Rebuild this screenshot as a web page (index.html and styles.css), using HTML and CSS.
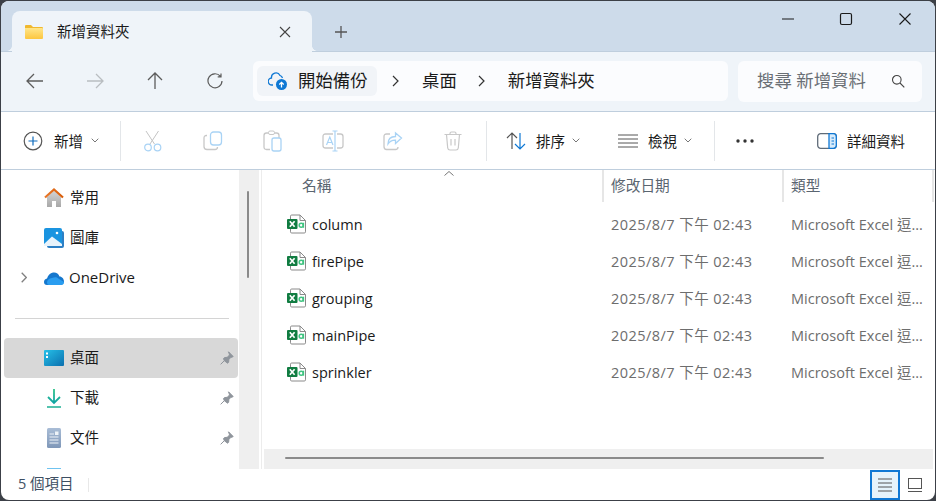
FILE: index.html
```html
<!DOCTYPE html>
<html lang="zh-Hant">
<head>
<meta charset="utf-8">
<title>新增資料夾</title>
<link rel="stylesheet" href="styles.css">
</head>
<body>
<svg class="defs" width="0" height="0" aria-hidden="true">
  <defs>
    <linearGradient id="fold" x1="0" y1="0" x2="0" y2="1"><stop offset="0" stop-color="#ffe68a"/><stop offset="1" stop-color="#fcc63f"/></linearGradient>
    <linearGradient id="roof" x1="0" y1="0" x2="1" y2="0"><stop offset="0" stop-color="#e8782a"/><stop offset="1" stop-color="#d85c08"/></linearGradient>
    <linearGradient id="wall" x1="0" y1="0" x2="0" y2="1"><stop offset="0" stop-color="#d4d4d4"/><stop offset="1" stop-color="#a8a8a8"/></linearGradient>
    <linearGradient id="desk" x1="0" y1="0" x2="1" y2="1"><stop offset="0" stop-color="#26c0e8"/><stop offset="1" stop-color="#0b6fae"/></linearGradient>
    <linearGradient id="doc" x1="0" y1="0" x2="0" y2="1"><stop offset="0" stop-color="#a9bdd6"/><stop offset="1" stop-color="#7f97b8"/></linearGradient>
    <linearGradient id="dl" x1="0" y1="0" x2="0" y2="1"><stop offset="0" stop-color="#2fc48a"/><stop offset="1" stop-color="#0fa3a3"/></linearGradient>
    <symbol id="xl" viewBox="0 0 20 20">
      <path d="M3.500 5V2.200q0-1.200 1.200-1.200H13l5.500 5.500v11.300q0 1.200-1.200 1.200H4.700q-1.200 0-1.200-1.200V15" fill="#fff" stroke="#8a8a8a"/>
      <path d="M13 1v5.500h5.500" fill="none" stroke="#8a8a8a"/>
      <rect x="0" y="5" width="10.500" height="10" rx="1" fill="#107c41"/>
      <path d="M2.800 7.300l4.800 5.400M7.600 7.300l-4.800 5.400" stroke="#fff" stroke-width="1.700"/>
      <circle cx="14.200" cy="11.300" r="2" fill="none" stroke="#3fc380" stroke-width="1.500"/>
      <path d="M16.400 8.700v5" stroke="#3fc380" stroke-width="1.500"/>
    </symbol>
    <symbol id="pin" viewBox="0 0 14 14">
      <path d="M8.500 .8l4.700 4.700-1.300.7-1 .1-2 2.200-.3 2.800-1 .9L4.300 9.700.8 13.200.8 13.200 4.300 9.700 3.500 7.600l1-1 2.700-.3 2.100-2 .1-1z" fill="#8f959c" stroke="#8f959c"/>
    </symbol>
    <symbol id="chev" viewBox="0 0 8 5"><path d="M.7.7L4 4l3.300-3.300" fill="none" stroke="#777" stroke-width="1"/></symbol>
  </defs>
</svg>
<div class="window">
  <header class="titlebar">
    <div class="tab">
      <svg class="tab-folder" width="20" height="16" viewBox="0 0 20 16"><path d="M1 2q0-1 1-1h5l2 2h9q1 0 1 1v2H1z" fill="#f0b82e"/><path d="M1 4h17q1 0 1 1v9q0 1-1 1H2q-1 0-1-1z" fill="url(#fold)"/></svg>
      <span class="tab-title">新增資料夾</span>
      <svg class="tab-close" width="12" height="12" viewBox="0 0 12 12"><path d="M1 1l10 10M11 1L1 11" stroke="#444" stroke-width="1.100"/></svg>
    </div>
    <svg class="tab-add" width="14" height="14" viewBox="0 0 14 14"><path d="M7 1v12M1 7h12" stroke="#555" stroke-width="1.300"/></svg>
    <div class="winbtns">
      <button class="winbtn"><svg width="14" height="14" viewBox="0 0 14 14"><path d="M1 7h12" stroke="#1a1a1a" stroke-width="1.100"/></svg></button>
      <button class="winbtn"><svg width="14" height="14" viewBox="0 0 14 14"><rect x="1.500" y="1.500" width="11" height="11" rx="1.500" fill="none" stroke="#1a1a1a" stroke-width="1.200"/></svg></button>
      <button class="winbtn"><svg width="14" height="14" viewBox="0 0 14 14"><path d="M1.500 1.500l11 11M12.500 1.500l-11 11" stroke="#1a1a1a" stroke-width="1.100"/></svg></button>
    </div>
  </header>

  <nav class="navbar">
    <button class="navbtn"><svg width="18" height="16" viewBox="0 0 18 16"><path d="M8 1L1 8l7 7M1 8h16" fill="none" stroke="#5c5c5c" stroke-width="1.300"/></svg></button>
    <button class="navbtn"><svg width="18" height="16" viewBox="0 0 18 16"><path d="M10 1l7 7-7 7M17 8H1" fill="none" stroke="#b9bdc1" stroke-width="1.300"/></svg></button>
    <button class="navbtn"><svg width="16" height="18" viewBox="0 0 16 18"><path d="M1 8l7-7 7 7M8 1v16" fill="none" stroke="#5c5c5c" stroke-width="1.300"/></svg></button>
    <button class="navbtn"><svg width="16" height="16" viewBox="0 0 16 16"><path d="M13.300 3.200A7 7 0 1 0 15 8M14 .5v3.300h-3.300" fill="none" stroke="#5c5c5c" stroke-width="1.200"/></svg></button>
    <div class="address">
      <div class="crumb-home">
        <svg class="cloud" width="20" height="20" viewBox="0 0 20 20"><path d="M5 14H4a3.500 3.500 0 0 1-.5-7A4.500 4.500 0 0 1 12 4.500 4 4 0 0 1 14.500 7" fill="none" stroke="#0f78d4" stroke-width="1.300"/><circle cx="13.500" cy="13.500" r="5.500" fill="#0f78d4"/><path d="M13.500 16.500v-5M11.300 13.500l2.200-2.200 2.200 2.200" fill="none" stroke="#fff" stroke-width="1.300"/></svg>
        <span>開始備份</span>
      </div>
      <svg class="sep-chev" width="7" height="12" viewBox="0 0 7 12"><path d="M1 1l5 5-5 5" fill="none" stroke="#333" stroke-width="1.200"/></svg>
      <span class="crumb">桌面</span>
      <svg class="sep-chev" width="7" height="12" viewBox="0 0 7 12"><path d="M1 1l5 5-5 5" fill="none" stroke="#333" stroke-width="1.200"/></svg>
      <span class="crumb">新增資料夾</span>
    </div>
    <div class="search">
      <span>搜尋 新增資料</span>
      <svg width="14" height="14" viewBox="0 0 14 14"><circle cx="5.800" cy="5.800" r="4.300" fill="none" stroke="#444" stroke-width="1.100"/><path d="M9 9l4.300 4.300" stroke="#444" stroke-width="1.100"/></svg>
    </div>
  </nav>

  <div class="toolbar">
    <div class="tool new">
      <svg width="20" height="20" viewBox="0 0 20 20"><circle cx="10" cy="10" r="8.800" fill="none" stroke="#555" stroke-width="1.200"/><path d="M10 5.500v9M5.500 10h9" stroke="#0f6cbd" stroke-width="1.200"/></svg>
      <span>新增</span>
      <svg class="chev" width="8" height="5"><use href="#chev"/></svg>
    </div>
    <i class="tsep"></i>
    <div class="tool-icon first"><svg width="20" height="22" viewBox="0 0 20 22"><path d="M3 1l8.500 13M15.500 1L7 14" stroke="#c4c4c4" fill="none"/><circle cx="5" cy="17.500" r="3.300" fill="none" stroke="#a9d3f5" stroke-width="1.200"/><circle cx="14.500" cy="17.500" r="3.300" fill="none" stroke="#a9d3f5" stroke-width="1.200"/></svg></div>
    <div class="tool-icon"><svg width="20" height="20" viewBox="0 0 20 20"><path d="M4 4.500H3.500Q1 4.500 1 7v8.500Q1 18.500 4 18.500h8q2.500 0 2.500-2.500" fill="none" stroke="#c8c8c8" stroke-width="1.300"/><rect x="7.500" y="1" width="11" height="13" rx="3" fill="#fff" stroke="#a9d3f5" stroke-width="1.300"/></svg></div>
    <div class="tool-icon"><svg width="20" height="22" viewBox="0 0 20 22"><path d="M7 19.500H3.500Q1 19.500 1 17V5.500Q1 3 3.500 3h10Q16 3 16 5.500V8" fill="none" stroke="#c8c8c8" stroke-width="1.300"/><rect x="5.500" y="1" width="6" height="3.500" rx="1.500" fill="#fff" stroke="#c8c8c8"/><rect x="9" y="8" width="9" height="13" rx="2" fill="#fff" stroke="#a9d3f5" stroke-width="1.300"/></svg></div>
    <div class="tool-icon"><svg width="22" height="22" viewBox="0 0 22 22"><path d="M11 4H3.500Q1 4 1 6.500v9Q1 18 3.500 18H11M15 4h3.500Q21 4 21 6.500v9Q21 18 18.500 18H15" fill="none" stroke="#c8c8c8" stroke-width="1.300"/><path d="M4.500 15l3.300-8 3.200 8M5.800 12.500h4.200" fill="none" stroke="#a9d3f5" stroke-width="1.200"/><path d="M13 1v20M10.500 1h5M10.500 21h5" stroke="#a9d3f5" stroke-width="1.200"/></svg></div>
    <div class="tool-icon"><svg width="20" height="20" viewBox="0 0 20 20"><path d="M7 3H3.500Q1 3 1 5.500V15.500Q1 18.500 3.500 18.500H12.500Q15 18.500 15 16" fill="none" stroke="#c8c8c8" stroke-width="1.300"/><path d="M12.500 2v3.500C8 5.500 5 8 5 13c2-3 4-4 7.500-3.800V12.500L18.500 7z" fill="none" stroke="#a9d3f5" stroke-width="1.300"/></svg></div>
    <div class="tool-icon"><svg width="18" height="20" viewBox="0 0 18 20"><path d="M.5 3.500h17M6 3.500V2.500Q6 1 7.500 1h3Q12 1 12 2.500v1M2.500 3.500L3.700 17Q4 19 6 19h6q2 0 2.300-2L15.500 3.500M7 8v6.500M11 8v6.500" fill="none" stroke="#c8c8c8" stroke-width="1.200"/></svg></div>
    <i class="tsep tsep-b"></i>
    <div class="tool sort">
      <svg width="20" height="18" viewBox="0 0 20 18"><path d="M1 6l5-5 5 5M6 1v16" fill="none" stroke="#555" stroke-width="1.200"/><path d="M9 12l5 5 5-5M14 17V1" fill="none" stroke="#0f78d4" stroke-width="1.200"/></svg>
      <span>排序</span>
      <svg class="chev" width="8" height="5"><use href="#chev"/></svg>
    </div>
    <div class="tool view">
      <svg width="20" height="14" viewBox="0 0 20 14"><path d="M0 1h20M0 5h20M0 9h20M0 13h20" stroke="#555" stroke-width="1"/></svg>
      <span>檢視</span>
      <svg class="chev" width="8" height="5"><use href="#chev"/></svg>
    </div>
    <i class="tsep tsep-c"></i>
    <svg class="more" width="20" height="4" viewBox="0 0 20 4"><circle cx="3" cy="2" r="1.700" fill="#333"/><circle cx="10" cy="2" r="1.700" fill="#333"/><circle cx="17" cy="2" r="1.700" fill="#333"/></svg>
    <div class="tool details">
      <svg width="20" height="16" viewBox="0 0 20 16"><rect x=".7" y=".7" width="18.600" height="14.600" rx="3" fill="#fff" stroke="#5f6b78" stroke-width="1.300"/><path d="M12 .7h4.300q3 0 3 3v8.600q0 3-3 3H12z" fill="#d9ecfb" stroke="#0f78d4" stroke-width="1.300"/><path d="M14.500 5h2.500M14.500 8h2.500M14.500 11h2.500" stroke="#0f78d4"/></svg>
      <span>詳細資料</span>
    </div>
  </div>

  <div class="body">
    <aside class="sidebar">
      <div class="side-item">
        <svg class="side-icon" width="20" height="20" viewBox="0 0 20 20"><path d="M3 9l7-6.500L17 9v10H12v-6H8v6H3z" fill="url(#wall)"/><path d="M1 9.500L10 1.500l9 8" fill="none" stroke="url(#roof)" stroke-width="2.200"/></svg>
        <span>常用</span>
      </div>
      <div class="side-item">
        <svg class="side-icon" width="20" height="20" viewBox="0 0 20 20"><rect x="3" y="3" width="17" height="17" rx="2" fill="#2d7fc4"/><rect y="0" width="18" height="18" rx="2" fill="#1a94e0"/><path d="M0 16l8-7.500L18 16v2H0z" fill="#e8f3fb"/><circle cx="13" cy="5" r="1.300" fill="#fff"/></svg>
        <span>圖庫</span>
      </div>
      <div class="side-item">
        <svg class="expand" width="6" height="11" viewBox="0 0 6 11"><path d="M.7.7l4.600 4.800-4.600 4.800" fill="none" stroke="#808080" stroke-width="1.300"/></svg>
        <svg class="side-icon" width="20" height="14" viewBox="0 0 20 14"><path d="M3 14Q0 14 0 11t3-3.500C4 4 6 2 9 1.500c3-.5 5.500 1 6.500 4C18 5.500 20 8 20 10.500S18 14 16 14z" fill="#1577cd"/><path d="M5 14q-2 0-2-2.500C3 9 5 7.500 8 7c3-1 5-1 7 1l5 3q0 3-3 3z" fill="#2a9df0"/></svg>
        <span class="latin">OneDrive</span>
      </div>
      <hr class="side-rule">
      <div class="side-item selected">
        <svg class="side-icon" width="20" height="16" viewBox="0 0 20 16"><rect width="20" height="16" rx="1" fill="url(#desk)"/><rect x="2" y="2.500" width="2" height="2" fill="#fff"/><rect x="2" y="6" width="2" height="2" fill="#fff"/></svg>
        <span>桌面</span>
        <svg class="pin" width="14" height="14"><use href="#pin"/></svg>
      </div>
      <div class="side-item">
        <svg class="side-icon" width="20" height="20" viewBox="0 0 20 20"><path d="M10 1v13M4 9l6 6 6-6" fill="none" stroke="url(#dl)" stroke-width="1.800"/><path d="M3 19h14" stroke="#2ab59a" stroke-width="1.600"/></svg>
        <span>下載</span>
        <svg class="pin" width="14" height="14"><use href="#pin"/></svg>
      </div>
      <div class="side-item">
        <svg class="side-icon" width="20" height="20" viewBox="0 0 20 20"><rect x="3" width="14" height="20" rx="1.500" fill="url(#doc)"/><path d="M5.500 6H10M5.500 9h9M5.500 12h9M5.500 15h9" stroke="#eef3f8"/><rect x="11" y="3.500" width="3.500" height="3.500" fill="#eef3f8"/></svg>
        <span>文件</span>
        <svg class="pin" width="14" height="14"><use href="#pin"/></svg>
      </div>
      <div class="side-item side-cut">
        <svg class="side-icon" width="20" height="20" viewBox="0 0 20 20"><rect x="3" width="14" height="20" fill="#6fc3f0"/></svg>
      </div>
    </aside>
    <div class="vscroll"><i></i></div>
    <main class="main">
      <div class="list-head">
        <svg class="sort-caret" width="10" height="5" viewBox="0 0 10 5"><path d="M.5 4.500L5 .5l4.500 4" fill="none" stroke="#777"/></svg>
        <div class="col col-name">名稱</div>
        <div class="col col-date">修改日期</div>
        <div class="col col-type">類型</div>
      </div>
      <div class="rows">
        <div class="row"><svg class="xl" width="20" height="20"><use href="#xl"/></svg><span class="name">column</span><span class="date">2025/8/7 下午 02:43</span><span class="type">Microsoft Excel 逗...</span></div>
        <div class="row"><svg class="xl" width="20" height="20"><use href="#xl"/></svg><span class="name">firePipe</span><span class="date">2025/8/7 下午 02:43</span><span class="type">Microsoft Excel 逗...</span></div>
        <div class="row"><svg class="xl" width="20" height="20"><use href="#xl"/></svg><span class="name">grouping</span><span class="date">2025/8/7 下午 02:43</span><span class="type">Microsoft Excel 逗...</span></div>
        <div class="row"><svg class="xl" width="20" height="20"><use href="#xl"/></svg><span class="name">mainPipe</span><span class="date">2025/8/7 下午 02:43</span><span class="type">Microsoft Excel 逗...</span></div>
        <div class="row"><svg class="xl" width="20" height="20"><use href="#xl"/></svg><span class="name">sprinkler</span><span class="date">2025/8/7 下午 02:43</span><span class="type">Microsoft Excel 逗...</span></div>
      </div>
      <div class="hscroll"><i></i></div>
    </main>
  </div>

  <footer class="status">
    <span class="count">5 個項目</span>
    <i class="status-sep"></i>
    <div class="view-btn active"><svg width="16" height="14" viewBox="0 0 16 14"><path d="M1 1h14M1 5h14M1 9h14M1 13h14" stroke="#555" stroke-width="1"/></svg></div>
    <div class="view-btn"><svg width="14" height="14" viewBox="0 0 14 14"><rect x=".5" y=".5" width="13" height="10" fill="none" stroke="#555"/><path d="M0 13.500h14" stroke="#555"/></svg></div>
  </footer>
</div>
</body>
</html>
```
FILE: styles.css
```css
* { box-sizing: border-box; }
html, body { margin: 0; padding: 0; }
body {
  width: 936px;
  height: 501px;
  padding: 1px;
  overflow: hidden;
  background: #3c4047;
  font-family: "Open Sans", "Noto Sans CJK TC", sans-serif;
  color: #1a1a1a;
}
.defs { position: absolute; }
button { border: 0; background: none; padding: 0; display: flex; align-items: center; justify-content: center; }
i { display: block; }

.window {
  width: 934px;
  height: 499px;
  display: flex;
  flex-direction: column;
  background: #fff;
  border-radius: 8px;
  overflow: hidden;
}

/* title bar */
.titlebar {
  height: 50px;
  flex: none;
  display: flex;
  align-items: flex-start;
  background: #cddbea;
  position: relative;
  z-index: 1;
}
.tab {
  position: relative;
  width: 300px;
  height: 41px;
  margin: 10px 0 0 11px;
  padding-left: 12px;
  display: flex;
  align-items: center;
  background: #eff4f9;
  border-radius: 8px 8px 0 0;
}
.tab::before, .tab::after {
  content: "";
  position: absolute;
  bottom: 1px;
  width: 5px;
  height: 5px;
}
.tab::before { left: -5px; background: radial-gradient(circle at 0 0, transparent 4.500px, #eff4f9 5px); }
.tab::after { right: -5px; background: radial-gradient(circle at 100% 0, transparent 4.500px, #eff4f9 5px); }
.tab-folder { margin-right: 13px; }
.tab-title { font-size: 14.5px; flex: 1; margin-bottom: 3px; }
.tab-close { margin-right: 21px; }
.tab-add { margin: 24px 0 0 22px; }
.winbtns { margin-left: auto; display: flex; margin-right: 1px; }
.winbtn { width: 58px; height: 36px; }
.winbtn:last-child { margin-left: 1px; }

/* nav */
.navbar {
  height: 61px;
  flex: none;
  display: flex;
  align-items: center;
  padding: 0 0 1px 4px;
  background: #eff4f9;
  border-top: 1px solid #bfcedd;
  border-bottom: 1px solid #bfcedd;
}
.navbtn { width: 60px; height: 40px; }
.address {
  width: 475px;
  height: 40px;
  margin-left: 8px;
  padding-left: 4px;
  display: flex;
  align-items: center;
  background: #fbfcfe;
  border-radius: 6px;
  font-size: 17.4px;
}
.crumb-home {
  width: 120px;
  height: 30px;
  padding-left: 11px;
  display: flex;
  align-items: center;
  gap: 10px;
  background: #f1f4f8;
  border-radius: 6px;
}
.crumb-home span { margin-bottom: 3px; }
.sep-chev { margin: 0 23px 0 15px; }
.crumb { line-height: 24px; margin-bottom: 2px; }
.crumb + .sep-chev { margin-right: 23px; margin-left: 21px; }
.search {
  width: 184px;
  height: 41px;
  margin-left: 10px;
  padding: 0 17px 0 19px;
  display: flex;
  align-items: center;
  justify-content: space-between;
  background: #fbfcfe;
  border-radius: 6px;
  font-size: 17.4px;
  color: #6a6f75;
}
.search span { margin-bottom: 3px; }

/* toolbar */
.toolbar {
  height: 58px;
  flex: none;
  display: flex;
  align-items: center;
  padding-left: 22px;
  border-bottom: 1px solid #bfcedd;
  font-size: 14.5px;
}
.tool { display: flex; align-items: center; }
.tool span { margin-bottom: 1px; }
.tool.new { width: 97px; gap: 11px; }
.tool .chev { margin-left: -3px; }
.tsep { width: 1px; height: 40px; background: #e3e6e9; }
.tool-icon { width: 60px; height: 40px; display: flex; align-items: center; justify-content: center; }
.tool-icon.first { margin-left: 2px; }
.tsep-b { margin-left: 3px; }
.tool.sort { margin-left: 19px; gap: 10px; width: 112px; }
.tool.view { gap: 10px; width: 96px; }
.more { margin-left: 20px; }
.tool.details { margin-left: 62px; gap: 10px; }

/* body */
.body { flex: 1; min-height: 0; display: flex; }
.sidebar {
  width: 238px;
  flex: none;
  padding: 8px 0 0 3px;
  overflow: hidden;
  font-size: 14.5px;
}
.side-item {
  position: relative;
  width: 234px;
  height: 40px;
  padding-left: 40px;
  display: flex;
  align-items: center;
  border-radius: 4px;
}
.side-item span { margin-left: 6px; margin-bottom: 4px; }
.side-item .latin { margin-left: 5px; margin-bottom: 3px; font-size: 15px; }
.side-icon { flex: none; }
.selected { background: #d8d8d8; }
.expand { position: absolute; left: 17px; top: 14px; }
.pin { position: absolute; right: 4px; top: 13px; }
.side-rule { height: 1px; margin: 20px 10px 19px 11px; border: 0; background: #d4d4d4; width: 214px; }
.side-cut { align-items: flex-start; padding-top: 10px; }

.vscroll { width: 20px; flex: none; background: #efefef; padding: 21px 0 0 8px; }
.vscroll i { width: 2px; height: 87px; border-radius: 1px; background: #8a8a8a; }

.main { flex: 1; min-width: 0; margin-left: 2px; border-left: 1px solid #ececec; display: flex; flex-direction: column; }
.list-head {
  position: relative;
  height: 32px;
  flex: none;
  display: grid;
  grid-template-columns: 342px 180px 150px;
  font-size: 14.7px;
  color: #5a6570;
}
.col { line-height: 31px; height: 32px; border-right: 2px solid #e6e6e6; }
.col-name { padding-left: 40px; }
.col-date { padding-left: 7px; }
.col-type { padding-left: 7px; }
.sort-caret { position: absolute; left: 182px; top: 1px; }

.rows { flex: 1; min-height: 0; padding-top: 3px; }
.row {
  height: 37px;
  display: grid;
  grid-template-columns: 50px 300px 180px 132px;
  align-items: center;
  font-size: 14.5px;
}
.xl { margin-left: 25px; }
.name { color: #1a1a1a; margin-top: 2px; }
.date, .type { color: #6d6d6d; white-space: nowrap; }
.date { letter-spacing: .45px; margin-left: -1px; }
.type { margin-left: -1px; }

.hscroll { height: 20px; flex: none; margin: 0 2px; background: #efefef; padding: 8px 0 0 21px; }
.hscroll i { width: 539px; height: 2px; border-radius: 1px; background: #8a8a8a; }

/* status */
.status {
  height: 31px;
  flex: none;
  display: flex;
  align-items: center;
  padding-left: 17px;
  font-size: 14.5px;
  color: #3d4f63;
}
.count { width: 70px; margin-bottom: 4px; }
.status-sep { width: 1px; height: 14px; background: #e8e8e8; }
.view-btn { width: 30px; height: 30px; display: flex; align-items: center; justify-content: center; }
.view-btn.active { margin-left: auto; background: #e5f3fb; border: 2px solid #0f78d4; }
.view-btn:last-child { margin-right: 5px; }
```
